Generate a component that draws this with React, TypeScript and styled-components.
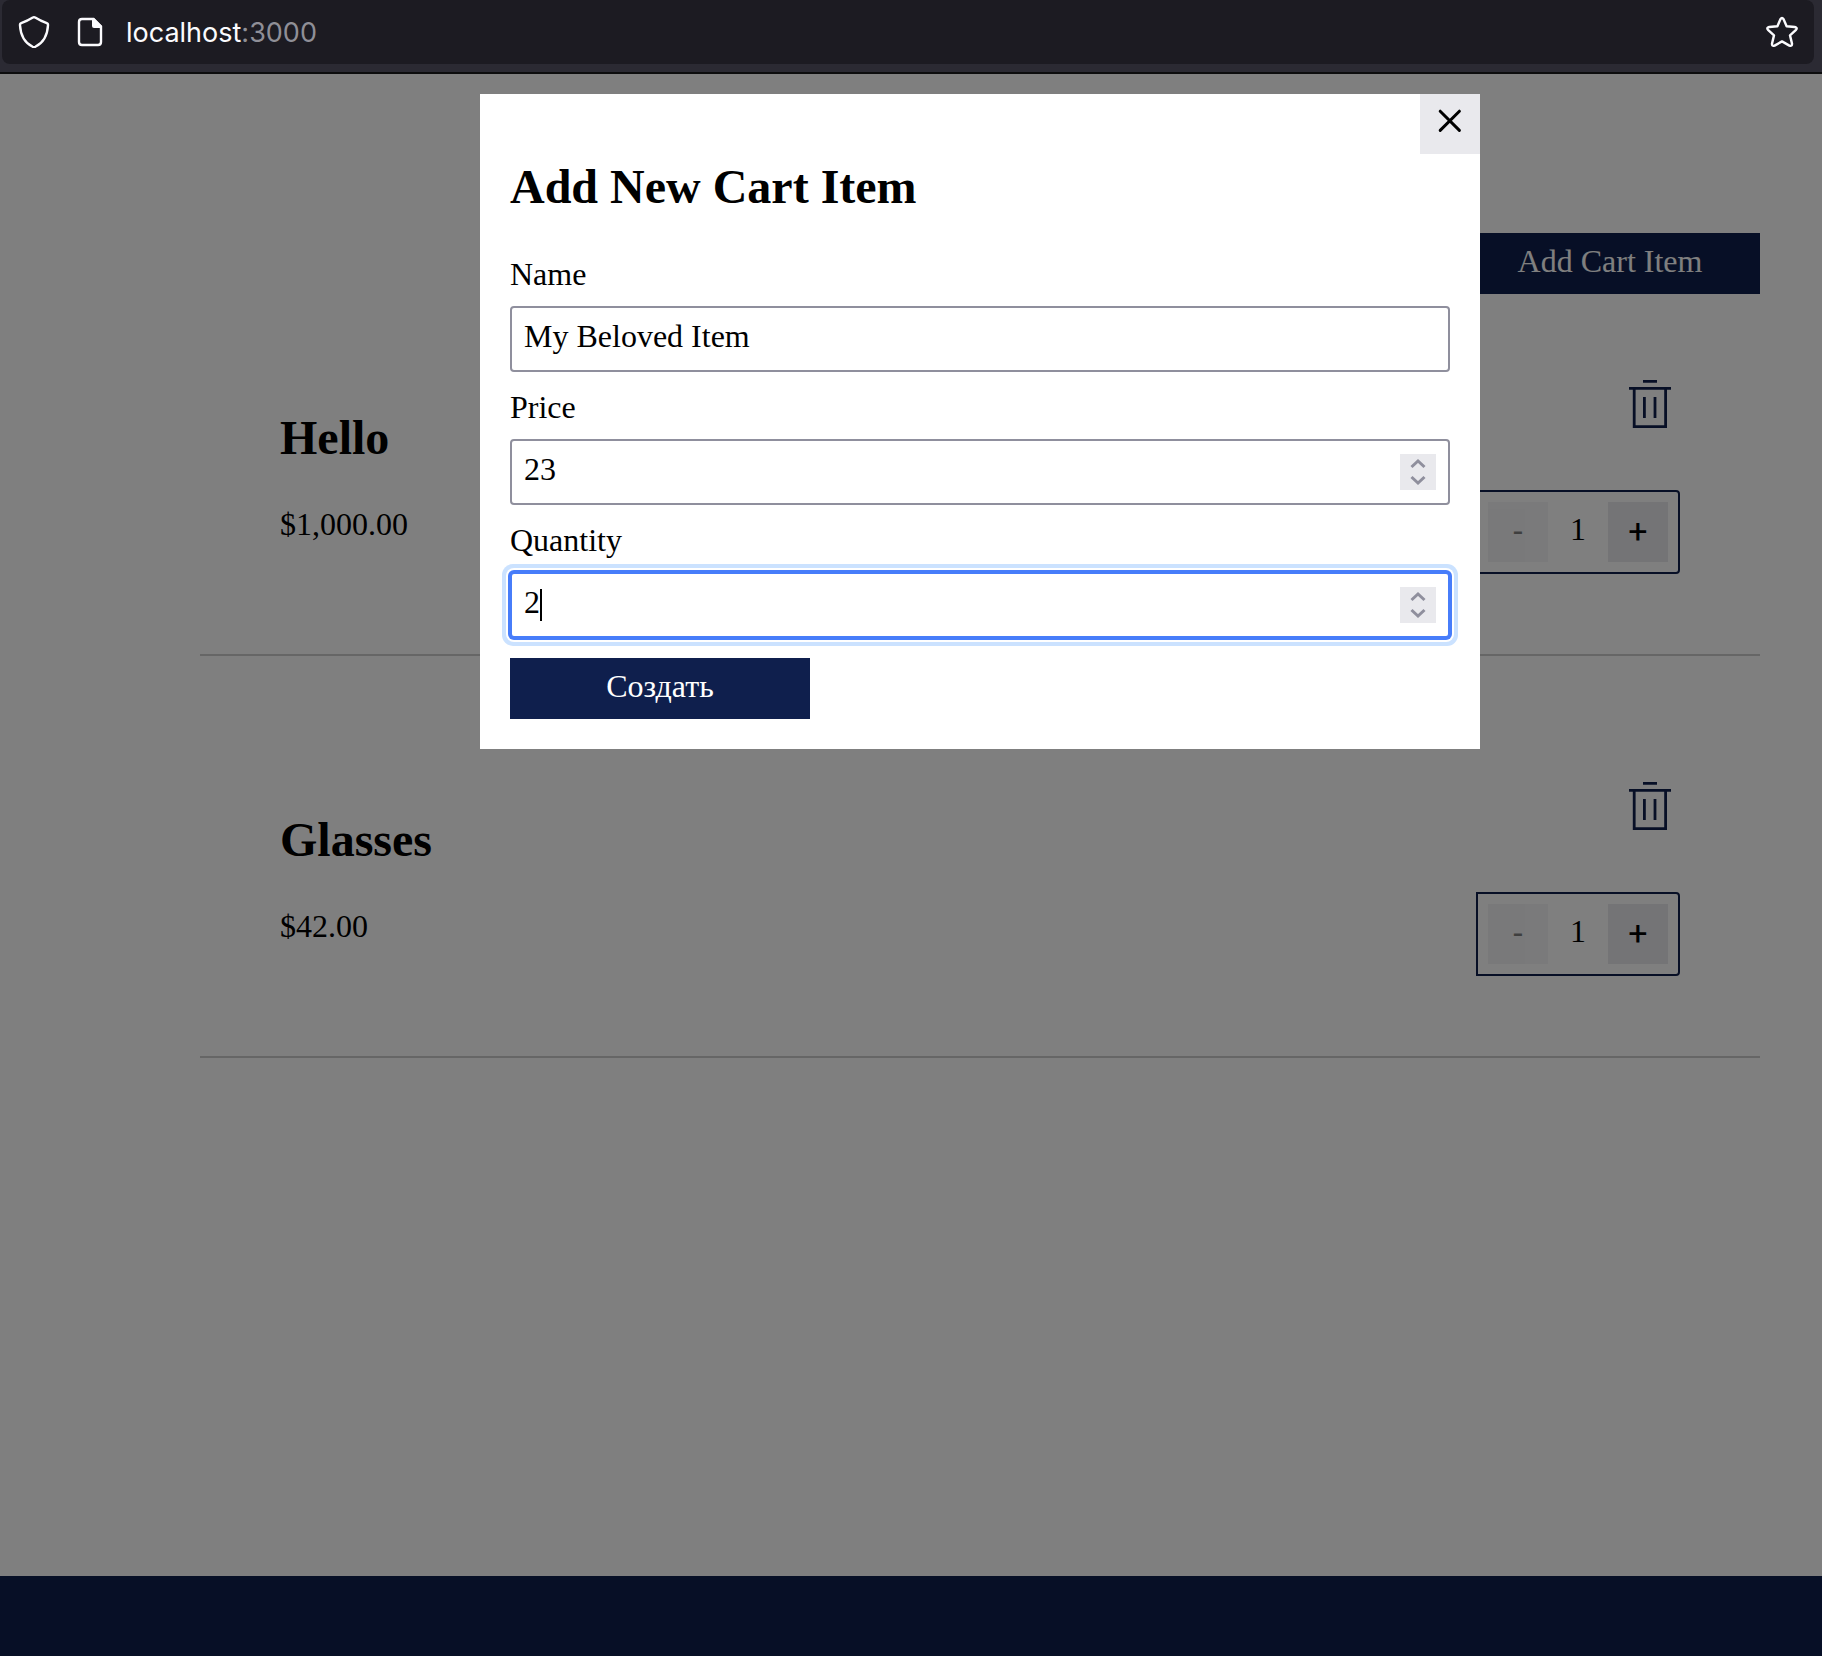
import React, { useState } from "react";
import styled, { createGlobalStyle, css } from "styled-components";

const navy = "#0f1f4d";
const serif = '"Liberation Serif", "Times New Roman", serif';
const sans = 'Inter, "Liberation Sans", sans-serif';

const GlobalStyle = createGlobalStyle`
  *, *::before, *::after {
    box-sizing: border-box;
  }
  body {
    margin: 0;
    background: #fff;
    color: #000;
    font: 32px/37px ${serif};
  }
  button, input {
    margin: 0;
    font: inherit;
    color: inherit;
  }
  button {
    padding: 0;
    border: 0;
    border-radius: 0;
    background: none;
    cursor: pointer;
  }
  svg {
    display: block;
    fill: none;
  }
`;

const Window = styled.div`
  display: flex;
  flex-direction: column;
  min-height: 100vh;
`;

const Toolbar = styled.header`
  padding: 0 8px 8px 2px;
  background: #2b2a33;
  border-bottom: 2px solid #0c0c0d;
  color: #fbfbfe;
`;

const AddressBar = styled.div`
  display: flex;
  align-items: center;
  gap: 16px;
  height: 64px;
  padding: 0 12px;
  border-radius: 8px;
  background: #1c1b22;
`;

const ToolbarButton = styled.button`
  display: grid;
  place-items: center;
  width: 40px;
  height: 40px;
`;

const Address = styled.span`
  flex: 1;
  padding-top: 2px;
  font: 27px/36px ${sans};
`;

const Port = styled.span`
  color: #8f8f97;
`;

const Site = styled.div`
  position: relative;
  display: flex;
  flex: 1;
  flex-direction: column;
`;

const Main = styled.main`
  display: flex;
  flex: 1;
  flex-direction: column;
  padding: 159px 62px 40px 200px;
`;

const PrimaryButton = styled.button`
  align-self: flex-end;
  width: 300px;
  padding: 10px 0 14px;
  background: ${navy};
  color: #fff;
`;

const SubmitButton = styled(PrimaryButton)`
  align-self: flex-start;
`;

const CartList = styled.ul`
  display: flex;
  flex-direction: column;
  gap: 40px;
  margin: 0;
  padding: 0;
  list-style: none;
`;

const CartRow = styled.li`
  display: flex;
  align-items: flex-end;
  justify-content: space-between;
  padding: 80px;
  border-bottom: 2px solid #ccc;
`;

const Info = styled.div`
  display: flex;
  flex-direction: column;
  gap: 41px;
  padding-bottom: 31px;
`;

const Title = styled.h2`
  margin: 0;
  font-size: 48px;
  line-height: 55px;
`;

const Price = styled.p`
  margin: 0;
`;

const Controls = styled.div`
  display: flex;
  flex-direction: column;
  align-items: flex-end;
  gap: 56px;
`;

const IconButton = styled.button`
  width: 60px;
  height: 60px;
  color: ${navy};
`;

const Counter = styled.div`
  display: flex;
  padding: 10px;
  border: 2px solid ${navy};
  border-radius: 0 4px 4px 0;
`;

const CounterButton = styled.button`
  width: 60px;
  height: 60px;
  padding-bottom: 2px;
  background: #e9e9ed;
  font: 34px/40px Roboto, "Liberation Sans", sans-serif;

  &:disabled {
    opacity: 0.5;
    color: #000;
    cursor: default;
  }
`;

const Count = styled.output`
  width: 60px;
  padding: 9px 0 14px;
  text-align: center;
`;

const Footer = styled.footer`
  height: 80px;
  background: ${navy};
`;

const Overlay = styled.div`
  position: absolute;
  inset: 0;
  display: flex;
  align-items: flex-start;
  justify-content: center;
  padding: 20px 62px 20px 200px;
  background: rgba(0, 0, 0, 0.5);
`;

const Modal = styled.section`
  display: flex;
  flex-direction: column;
  width: 1000px;
  max-width: 100%;
  background: #fff;
`;

const CloseButton = styled.button`
  align-self: flex-end;
  width: 60px;
  height: 60px;
  background: #e9e9ed;
`;

const ModalBody = styled.div`
  padding: 5px 30px 30px;
`;

const Form = styled.form`
  display: flex;
  flex-direction: column;
  gap: 20px;
  margin-top: 45px;
`;

const Field = styled.div`
  display: flex;
  flex-direction: column;
  gap: 16px;
`;

const Label = styled.label`
  line-height: 31px;
`;

const Box = styled.div<{ $active?: boolean }>`
  position: relative;
  display: flex;
  align-items: center;
  height: 66px;
  padding: 0 12px;
  border: 2px solid #8f8f9d;
  border-radius: 4px;
  background: #fff;
  ${(p) =>
    p.$active &&
    css`
      border-color: #477dfa;
      box-shadow: 0 0 0 2px #477dfa, 0 0 0 4px #fff, 0 0 0 8px #cbe2ff;
    `}
`;

const TextInput = styled.input`
  flex: 1;
  min-width: 0;
  height: 62px;
  padding: 9px 0 15px;
  border: 0;
  outline: 0;
  background: transparent;
  caret-color: transparent;
  appearance: textfield;

  &::-webkit-inner-spin-button,
  &::-webkit-outer-spin-button {
    margin: 0;
    appearance: none;
  }
`;

const Caret = styled.span`
  position: absolute;
  top: 15px;
  left: 28px;
  width: 2px;
  height: 32px;
  background: #000;
`;

const Spinner = styled.div`
  display: flex;
  flex-direction: column;
  background: #e9e9ed;
  color: #8f8f9d;
`;

const SpinButton = styled.button`
  width: 36px;
  height: 18px;
`;

const ShieldIcon = () => (
  <svg width="32" height="32" viewBox="0 0 32 32" stroke="currentColor" strokeWidth="2.4" strokeLinejoin="round" aria-hidden="true">
    <path d="M14.8 1.5Q16 .9 17.2 1.5C20.5 3.6 24.6 5.6 28.8 7.1Q30.2 7.7 30 9.2C29.5 18.5 26.5 26.2 17.3 30.8Q16 31.4 14.7 30.8C5.5 26.2 2.5 18.5 2 9.2Q1.8 7.7 3.2 7.1C7.4 5.6 11.5 3.6 14.8 1.5Z" />
  </svg>
);

const PageIcon = () => (
  <svg width="32" height="32" viewBox="0 0 32 32" aria-hidden="true">
    <path
      d="M8 3H19.5L27 10.5V26Q27 29 24 29H8Q5 29 5 26V6Q5 3 8 3Z"
      stroke="currentColor"
      strokeWidth="2.4"
    />
    <path d="M18 2H20L28 10V12H20Q18 12 18 10Z" fill="currentColor" />
  </svg>
);

const StarIcon = () => (
  <svg width="32" height="32" viewBox="0 0 32 32" stroke="currentColor" strokeWidth="2.4" strokeLinejoin="round" aria-hidden="true">
    <path d="M14.4 3.2Q16 .9 17.6 3.2L20.6 10.2L28.8 11Q31.8 11.6 30 13.8L24 19.4L26 27.6Q26.2 30.6 23.4 29.6L16 25.4L8.6 29.6Q5.8 30.6 6 27.6L8 19.4L2 13.8Q.2 11.6 3.2 11L11.4 10.2Z" />
  </svg>
);

const TrashIcon = () => (
  <svg width="60" height="60" viewBox="0 0 60 60" stroke="currentColor" strokeWidth="2.8" aria-hidden="true">
    <path d="M23 7.4H37M9 14.4H51M14.2 14.4V52.6H45.6V14.4M24.4 23V44M35 23V44" />
  </svg>
);

const CloseIcon = () => (
  <svg width="60" height="60" viewBox="0 0 60 60" stroke="currentColor" strokeWidth="3" strokeLinecap="round" aria-hidden="true">
    <path d="M20.2 17.2L39.4 36.4M39.4 17.2L20.2 36.4" />
  </svg>
);

const Chevron = ({ down }: { down?: boolean }) => (
  <svg width="36" height="18" viewBox="0 0 36 18" stroke="currentColor" strokeWidth="3" aria-hidden="true">
    <path d={down ? "M11.5 5L18 11L24.5 5" : "M11.5 13L18 7L24.5 13"} />
  </svg>
);

type Item = { name: string; price: number; count: number };

const initialItems: Item[] = [
  { name: "Hello", price: 1000, count: 1 },
  { name: "Glasses", price: 42, count: 1 },
];

const money = new Intl.NumberFormat("en-US", { style: "currency", currency: "USD" });

function NumberField(props: {
  id: string;
  label: string;
  value: string;
  active?: boolean;
  onChange: (value: string) => void;
}) {
  const step = (by: number) => props.onChange(String(Number(props.value) + by));
  return (
    <Field>
      <Label htmlFor={props.id}>{props.label}</Label>
      <Box $active={props.active}>
        <TextInput
          id={props.id}
          type="number"
          value={props.value}
          onChange={(e) => props.onChange(e.target.value)}
        />
        {props.active && <Caret />}
        <Spinner>
          <SpinButton type="button" aria-label={`Increase ${props.label}`} onClick={() => step(1)}>
            <Chevron />
          </SpinButton>
          <SpinButton type="button" aria-label={`Decrease ${props.label}`} onClick={() => step(-1)}>
            <Chevron down />
          </SpinButton>
        </Spinner>
      </Box>
    </Field>
  );
}

export default function App() {
  const [items, setItems] = useState(initialItems);
  const [open, setOpen] = useState(true);
  const [name, setName] = useState("My Beloved Item");
  const [price, setPrice] = useState("23");
  const [quantity, setQuantity] = useState("2");

  const changeCount = (index: number, by: number) =>
    setItems(items.map((item, i) => (i === index ? { ...item, count: item.count + by } : item)));

  const submit = (event: React.FormEvent) => {
    event.preventDefault();
    setItems([...items, { name, price: Number(price), count: Number(quantity) }]);
    setOpen(false);
  };

  return (
    <Window>
      <GlobalStyle />
      <Toolbar>
        <AddressBar>
          <ToolbarButton aria-label="Tracking protection">
            <ShieldIcon />
          </ToolbarButton>
          <ToolbarButton aria-label="Site information">
            <PageIcon />
          </ToolbarButton>
          <Address>
            localhost<Port>:3000</Port>
          </Address>
          <ToolbarButton aria-label="Bookmark">
            <StarIcon />
          </ToolbarButton>
        </AddressBar>
      </Toolbar>
      <Site>
        <Main>
          <PrimaryButton onClick={() => setOpen(true)}>Add Cart Item</PrimaryButton>
          <CartList>
            {items.map((item, i) => (
              <CartRow key={i}>
                <Info>
                  <Title>{item.name}</Title>
                  <Price>{money.format(item.price)}</Price>
                </Info>
                <Controls>
                  <IconButton
                    aria-label={`Remove ${item.name}`}
                    onClick={() => setItems(items.filter((_, n) => n !== i))}
                  >
                    <TrashIcon />
                  </IconButton>
                  <Counter>
                    <CounterButton disabled={item.count <= 1} onClick={() => changeCount(i, -1)}>
                      -
                    </CounterButton>
                    <Count>{item.count}</Count>
                    <CounterButton onClick={() => changeCount(i, 1)}>+</CounterButton>
                  </Counter>
                </Controls>
              </CartRow>
            ))}
          </CartList>
        </Main>
        <Footer />
        {open && (
          <Overlay>
            <Modal role="dialog" aria-modal="true" aria-labelledby="modal-title">
              <CloseButton aria-label="Close" onClick={() => setOpen(false)}>
                <CloseIcon />
              </CloseButton>
              <ModalBody>
                <Title id="modal-title">Add New Cart Item</Title>
                <Form onSubmit={submit}>
                  <Field>
                    <Label htmlFor="name">Name</Label>
                    <Box>
                      <TextInput id="name" type="text" value={name} onChange={(e) => setName(e.target.value)} />
                    </Box>
                  </Field>
                  <NumberField id="price" label="Price" value={price} onChange={setPrice} />
                  <NumberField id="quantity" label="Quantity" value={quantity} active onChange={setQuantity} />
                  <SubmitButton type="submit">Создать</SubmitButton>
                </Form>
              </ModalBody>
            </Modal>
          </Overlay>
        )}
      </Site>
    </Window>
  );
}
